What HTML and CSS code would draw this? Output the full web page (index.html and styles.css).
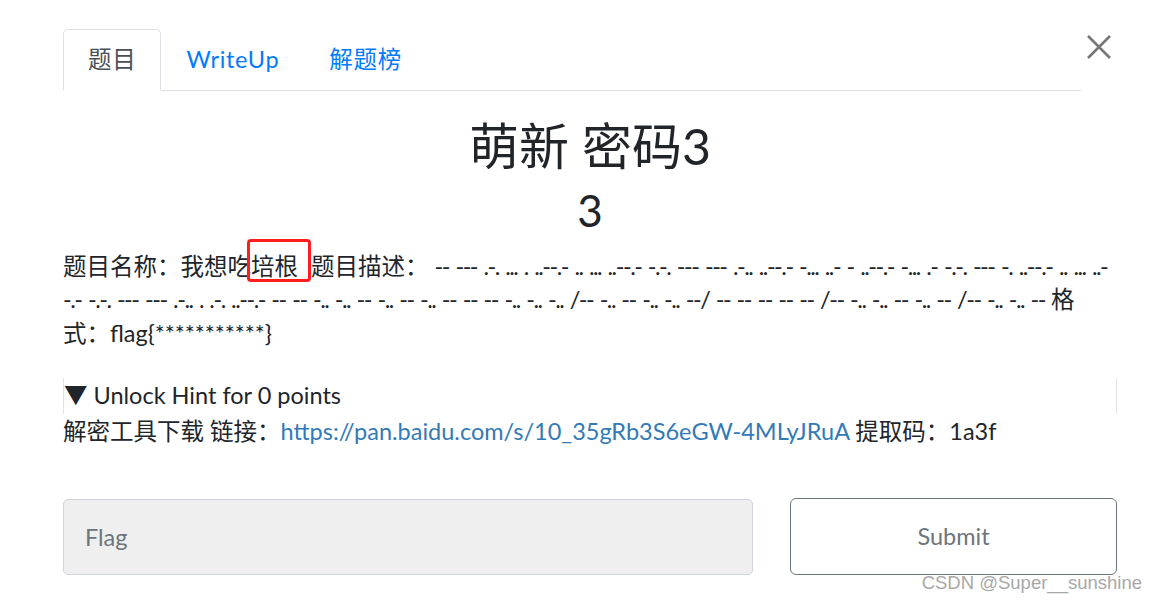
FILE: index.html
```html
<!DOCTYPE html>
<html lang="zh">
	<head>
		<meta charset="UTF-8" />
		<title>萌新 密码3</title>
		<link rel="stylesheet" href="styles.css">
	</head>
	<body>
		<div class="modal-body">
			<div class="tab-row">
				<ul class="nav-tabs">
					<li class="nav-link active">题目</li>
					<li class="nav-link">WriteUp</li>
					<li class="nav-link">解题榜</li>
				</ul>
				<button class="close" aria-label="Close">
					<svg width="26" height="26" viewBox="0 0 26 26">
						<path d="M2 2 L24 24 M24 2 L2 24" stroke="#777" stroke-width="2.6" fill="none" />
					</svg>
				</button>
			</div>

			<div class="tab-content">
				<h2 class="challenge-name">萌新 密码3</h2>
				<h3 class="challenge-value">3</h3>

				<p class="challenge-desc">题目名称：我想吃<span class="mark">培根</span>题目描述： <span class="morse">-- --- .-. ... . ..--.- .. ... ..--.- -.-. --- --- .-.. ..--.- -... ..- - ..--.- -... .- -.-. --- -. ..--.- .. ... ..--.- -.-. --- --- .-.. . .-. ..--.- -- -- -.. -.. -- -.. -- -.. -- -- -- -.. -.. -.. /-- -.. -- -.. -.. --/ -- -- -- -- -- /-- -.. -.. -- -.. -- /-- -.. -.. --</span> 格式：flag{***********}</p>

				<div class="hint">▼ Unlock Hint for 0 points</div>
				<p class="hint-text">解密工具下载 链接：<a href="#">https://pan.baidu.com/s/10_35gRb3S6eGW-4MLyJRuA</a> 提取码：1a3f</p>

				<div class="submit-row">
					<input class="flag-input" type="text" placeholder="Flag">
					<button class="submit-btn">Submit</button>
				</div>
			</div>

			<div class="watermark">CSDN @Super__sunshine</div>
		</div>
	</body>
</html>
```

FILE: styles.css
```css
body {
	margin: 0;
	background: #fff;
	font-family: "Lato", "Noto Sans CJK SC", sans-serif;
	font-size: 23.5px;
	line-height: 33.6px;
	color: #212529;
}

.modal-body {
	position: relative;
	width: 1054px;
	height: 602px;
	padding: 29px 40px 0 63px;
	box-sizing: content-box;
}

.tab-row {
	display: flex;
	align-items: flex-start;
}

.nav-tabs {
	display: flex;
	list-style: none;
	margin: 0;
	padding: 0;
	width: 1018px;
	border-bottom: 1px solid #dee2e6;
}

.nav-link {
	padding: 13px 24px;
	margin-bottom: -1px;
	border: 1px solid transparent;
	border-radius: 5px 5px 0 0;
	color: #007bff;
	letter-spacing: 0.7px;
}

.nav-link.active {
	color: #495057;
	border-color: #dee2e6 #dee2e6 #fff;
	background: #fff;
}

.close {
	margin: 5px 0 0 5px;
	padding: 0;
	border: none;
	background: none;
	width: 26px;
	height: 26px;
}

.challenge-name {
	margin: 25px 0 0;
	text-align: center;
	font-size: 50px;
	line-height: 60px;
	font-weight: 400;
}

.challenge-value {
	margin: 8px 0 0;
	text-align: center;
	font-size: 44px;
	line-height: 52px;
	font-weight: 400;
}

.challenge-desc {
	margin: 14px 0 0;
}

.morse {
	letter-spacing: -1.5px;
	word-spacing: 1.9px;
}

.mark {
	position: relative;
	margin-right: 13px;
}

.mark::after {
	content: "";
	position: absolute;
	left: -4px;
	right: -13px;
	top: -13px;
	bottom: -2px;
	border: 3.5px solid #ff1e1e;
	border-radius: 4px;
}

.hint {
	margin-top: 28px;
	padding: 1px 0;
	border-left: 1px solid #e3e3e3;
	border-right: 1px solid #e3e3e3;
}

.hint-text {
	margin: 1px 0 0;
}

.hint-text a {
	color: #337ab7;
	text-decoration: none;
}

.submit-row {
	display: flex;
	gap: 37px;
	margin-top: 50px;
}

.flag-input {
	width: 690px;
	height: 76px;
	box-sizing: border-box;
	padding: 0 21px;
	border: 1px solid #ced4da;
	border-radius: 5px;
	background: #efefef;
	font-family: "Lato", sans-serif;
	font-size: 23.5px;
	color: #495057;
}

.flag-input::placeholder {
	color: #6c757d;
}

.submit-btn {
	width: 327px;
	height: 77px;
	margin-top: -1px;
	border: 1px solid #6c757d;
	border-radius: 6px;
	background: #fff;
	font-family: "Lato", sans-serif;
	font-size: 23.5px;
	color: #6c757d;
}

.watermark {
	position: absolute;
	right: 15px;
	top: 566px;
	font-family: "Liberation Sans", sans-serif;
	font-size: 18.5px;
	color: #a8a8a8;
	text-shadow: 0 0 2px #fff;
}
```
